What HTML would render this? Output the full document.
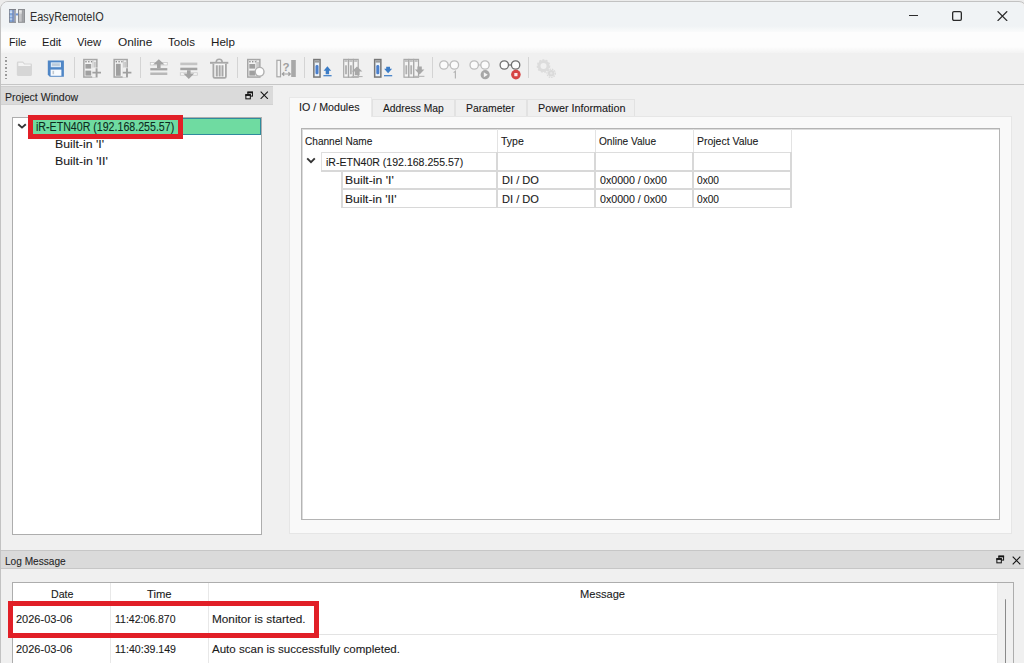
<!DOCTYPE html>
<html><head><meta charset="utf-8"><style>
html,body{margin:0;padding:0;}
body{width:1024px;height:663px;overflow:hidden;position:relative;background:#f0f0f0;font-family:"Liberation Sans",sans-serif;}
body>div,body>svg{position:absolute;}
.t{white-space:pre;-webkit-text-stroke:0.1px currentColor;}
</style></head><body>
<div style="left:0;top:0;width:1024px;height:663px;background:#ececec;"></div>
<div style="left:0;top:1px;width:1025px;height:700px;background:#f0f0f0;border:1px solid #c2c2c2;border-radius:8px 8px 0 0;"></div>
<div style="left:1px;top:2px;width:1023px;height:30px;background:linear-gradient(#f0f3f5 0,#f0f3f5 80%,#fafbfb 100%);border-radius:7px 7px 0 0;"></div>
<svg style="left:0;top:0" width="30" height="30" viewBox="0 0 30 30">
<rect x="9" y="9" width="7" height="13.8" fill="#7d8088"/>
<rect x="9.8" y="10" width="2.6" height="11.8" fill="#7ea6de"/>
<rect x="9.8" y="10.6" width="2.6" height="1" fill="#eef4fb"/><rect x="9.8" y="12.2" width="2.6" height="0.9" fill="#e6eef8"/>
<rect x="9.8" y="15.6" width="2.6" height="0.9" fill="#dfe9f6"/><rect x="9.8" y="18.6" width="2.6" height="0.9" fill="#dfe9f6"/>
<rect x="12.6" y="10" width="1.8" height="11.8" fill="#7c93c8"/>
<rect x="14.5" y="10" width="1.2" height="11.8" fill="#b9bcc2"/>
<rect x="15.8" y="13.4" width="2.6" height="2" fill="#6f95d6"/>
<rect x="18" y="9" width="7" height="13.8" fill="#8a8c90"/>
<rect x="19" y="10" width="2.8" height="11.8" fill="#c4c5c8"/>
<rect x="19" y="10.6" width="2.8" height="1.1" fill="#f4f4f4"/><rect x="19" y="12.4" width="2.8" height="1" fill="#ececec"/>
<rect x="22.2" y="10" width="2" height="11.8" fill="#a4a6aa"/>
</svg>
<div class="t" style="left:30px;top:10.59px;font-size:12.5px;line-height:13.963px;color:#2e2e2e;letter-spacing:0.000px;transform:scaleX(0.8708);transform-origin:0 0;-webkit-text-stroke:0;">EasyRemoteIO</div>
<div style="left:908.5px;top:14.8px;width:9.8px;height:1.3px;background:#2c2c2c;"></div>
<svg style="left:951px;top:10px" width="12" height="12" viewBox="0 0 12 12"><rect x="1.65" y="1.65" width="8.7" height="8.7" rx="1.3" fill="none" stroke="#2a2a2a" stroke-width="1.3"/></svg>
<svg style="left:997px;top:11px" width="11" height="10" viewBox="0 0 11 10"><path d="M0.6 0.3 L10.2 9.9 M10.2 0.3 L0.6 9.9" stroke="#2a2a2a" stroke-width="1.25"/></svg>
<div style="left:1px;top:32px;width:1023px;height:21px;background:linear-gradient(#fdfdfd 0,#fdfdfd 70%,#f3f3f3 100%);"></div>
<div class="t" style="left:9.3px;top:36.49px;font-size:11.5px;line-height:12.845px;color:#1a1a1a;letter-spacing:0.000px;transform:scaleX(0.9336);transform-origin:0 0;-webkit-text-stroke:0;">File</div>
<div class="t" style="left:42.2px;top:36.49px;font-size:11.5px;line-height:12.845px;color:#1a1a1a;letter-spacing:0.000px;transform:scaleX(0.9689);transform-origin:0 0;-webkit-text-stroke:0;">Edit</div>
<div class="t" style="left:77.3px;top:36.49px;font-size:11.5px;line-height:12.845px;color:#1a1a1a;letter-spacing:0.000px;transform:scaleX(0.9790);transform-origin:0 0;-webkit-text-stroke:0;">View</div>
<div class="t" style="left:117.6px;top:36.49px;font-size:11.5px;line-height:12.845px;color:#1a1a1a;letter-spacing:0.000px;transform:scaleX(1.0318);transform-origin:0 0;-webkit-text-stroke:0;">Online</div>
<div class="t" style="left:167.6px;top:36.49px;font-size:11.5px;line-height:12.845px;color:#1a1a1a;letter-spacing:0.000px;transform:scaleX(1.0020);transform-origin:0 0;-webkit-text-stroke:0;">Tools</div>
<div class="t" style="left:210.5px;top:36.49px;font-size:11.5px;line-height:12.845px;color:#1a1a1a;letter-spacing:0.000px;transform:scaleX(1.0105);transform-origin:0 0;-webkit-text-stroke:0;">Help</div>
<div style="left:1px;top:53px;width:1023px;height:31px;background:#f0f0f0;"></div>
<div style="left:1px;top:83.6px;width:1023px;height:1px;background:#c6c6c6;"></div>
<div style="left:5px;top:56.5px;width:1.5px;height:1.5px;background:#9a9a9a;"></div>
<div style="left:5px;top:60.0px;width:1.5px;height:1.5px;background:#9a9a9a;"></div>
<div style="left:5px;top:63.5px;width:1.5px;height:1.5px;background:#9a9a9a;"></div>
<div style="left:5px;top:67.0px;width:1.5px;height:1.5px;background:#9a9a9a;"></div>
<div style="left:5px;top:70.5px;width:1.5px;height:1.5px;background:#9a9a9a;"></div>
<div style="left:5px;top:74.0px;width:1.5px;height:1.5px;background:#9a9a9a;"></div>
<div style="left:5px;top:77.5px;width:1.5px;height:1.5px;background:#9a9a9a;"></div>
<div style="left:73.5px;top:57px;width:1px;height:21px;background:#d4d4d4;"></div>
<div style="left:140px;top:57px;width:1px;height:21px;background:#d4d4d4;"></div>
<div style="left:237px;top:57px;width:1px;height:21px;background:#d4d4d4;"></div>
<div style="left:303.5px;top:57px;width:1px;height:21px;background:#d4d4d4;"></div>
<div style="left:431.5px;top:57px;width:1px;height:21px;background:#d4d4d4;"></div>
<div style="left:528px;top:57px;width:1px;height:21px;background:#d4d4d4;"></div>
<div style="left:1px;top:86px;width:271.5px;height:18.5px;background:#dadada;border-top:1px solid #cfcfcf;border-bottom:1px solid #d2d2d2;box-sizing:border-box;"></div>
<div class="t" style="left:5.3px;top:90.95px;font-size:11px;line-height:12.287px;color:#262626;letter-spacing:0.000px;transform:scaleX(0.9579);transform-origin:0 0;">Project Window</div>
<svg style="left:244.6px;top:90.9px" width="8.6" height="8.8" viewBox="0 0 10 10"><rect x="3.4" y="1.2" width="5.4" height="4.6" fill="none" stroke="#151515" stroke-width="1.2"/><rect x="2.8" y="0.6" width="6.6" height="2" fill="#151515"/><rect x="1" y="4.2" width="5.2" height="4.8" fill="#dadada" stroke="#151515" stroke-width="1.2"/><rect x="0.4" y="3.6" width="6.4" height="2" fill="#151515"/></svg>
<svg style="left:260px;top:90.8px" width="8.5" height="8.5" viewBox="0 0 9 9"><path d="M0.7 0.7 L8.3 8.3 M8.3 0.7 L0.7 8.3" stroke="#151515" stroke-width="1.15"/></svg>
<div style="left:12px;top:117px;width:250px;height:417.5px;background:#fff;border:1px solid #adadad;box-sizing:border-box;"></div>
<div style="left:30px;top:118px;width:231px;height:16.5px;background:#6fdba1;border:1.5px solid #2e8b9c;box-sizing:border-box;"></div>
<svg style="left:17px;top:122px" width="10" height="7" viewBox="0 0 10 7"><path d="M1.2 2.2 L5 5.6 L8.8 2.2" fill="none" stroke="#333" stroke-width="1.9"/></svg>
<div class="t" style="left:35.5px;top:120.74px;font-size:12px;line-height:13.404px;color:#0d2a1c;letter-spacing:0.000px;transform:scaleX(0.8854);transform-origin:0 0;-webkit-text-stroke:0.1px currentColor;">iR-ETN40R (192.168.255.57)</div>
<div style="left:28px;top:115px;width:155px;height:24px;border:5px solid #e11f27;box-sizing:border-box;"></div>
<div class="t" style="left:55.0px;top:138.19px;font-size:11.5px;line-height:12.845px;color:#1a1a1a;letter-spacing:0.000px;transform:scaleX(1.0668);transform-origin:0 0;-webkit-text-stroke:0.1px currentColor;">Built-in 'I'</div>
<div class="t" style="left:55.0px;top:155.09px;font-size:11.5px;line-height:12.845px;color:#1a1a1a;letter-spacing:0.000px;transform:scaleX(1.0747);transform-origin:0 0;-webkit-text-stroke:0.1px currentColor;">Built-in 'II'</div>
<div style="left:288.8px;top:116px;width:723px;height:417.5px;background:#f9f9f9;border:1px solid #e6e6e6;box-sizing:border-box;"></div>
<div style="left:289px;top:96.7px;width:83px;height:20.3px;background:#f9f9f9;border:1px solid #e8e8e8;border-bottom:none;box-sizing:border-box;"></div>
<div style="left:372px;top:98.5px;width:82.5px;height:17.5px;background:#efefef;border:1px solid #e2e2e2;border-bottom:none;box-sizing:border-box;"></div>
<div style="left:454.5px;top:98.5px;width:72.5px;height:17.5px;background:#efefef;border:1px solid #e2e2e2;border-bottom:none;box-sizing:border-box;"></div>
<div style="left:527px;top:98.5px;width:108px;height:17.5px;background:#efefef;border:1px solid #e2e2e2;border-bottom:none;box-sizing:border-box;"></div>
<div class="t" style="left:299px;top:100.64px;font-size:11px;line-height:12.287px;color:#1a1a1a;letter-spacing:0.000px;transform:scaleX(0.9702);transform-origin:0 0;">IO / Modules</div>
<div class="t" style="left:382.5px;top:102.14px;font-size:11px;line-height:12.287px;color:#1a1a1a;letter-spacing:0.000px;transform:scaleX(0.9366);transform-origin:0 0;">Address Map</div>
<div class="t" style="left:466.2px;top:102.14px;font-size:11px;line-height:12.287px;color:#1a1a1a;letter-spacing:0.000px;transform:scaleX(0.9464);transform-origin:0 0;">Parameter</div>
<div class="t" style="left:538.4px;top:102.14px;font-size:11px;line-height:12.287px;color:#1a1a1a;letter-spacing:0.000px;transform:scaleX(0.9791);transform-origin:0 0;">Power Information</div>
<div style="left:301px;top:128px;width:699px;height:392px;background:#fff;border:1px solid #b4b4b4;box-shadow:inset 1px 1px 0 #dcdcdc;box-sizing:border-box;"></div>
<div style="left:497px;top:129px;width:1px;height:23px;background:#e3e3e3;"></div>
<div style="left:595px;top:129px;width:1px;height:23px;background:#e3e3e3;"></div>
<div style="left:693px;top:129px;width:1px;height:23px;background:#e3e3e3;"></div>
<div style="left:791px;top:129px;width:1px;height:23px;background:#e3e3e3;"></div>
<div class="t" style="left:305px;top:135.29px;font-size:11.5px;line-height:12.845px;color:#1a1a1a;letter-spacing:0.000px;transform:scaleX(0.8773);transform-origin:0 0;">Channel Name</div>
<div class="t" style="left:501.2px;top:135.29px;font-size:11.5px;line-height:12.845px;color:#1a1a1a;letter-spacing:0.000px;transform:scaleX(0.9145);transform-origin:0 0;">Type</div>
<div class="t" style="left:598.7px;top:135.29px;font-size:11.5px;line-height:12.845px;color:#1a1a1a;letter-spacing:0.000px;transform:scaleX(0.8785);transform-origin:0 0;">Online Value</div>
<div class="t" style="left:696.6px;top:135.29px;font-size:11.5px;line-height:12.845px;color:#1a1a1a;letter-spacing:0.000px;transform:scaleX(0.9090);transform-origin:0 0;">Project Value</div>
<div style="left:321px;top:151.5px;width:471px;height:1.5px;background:#dddddd;"></div>
<div style="left:321px;top:169.5px;width:471px;height:2px;background:#d8d8d8;"></div>
<div style="left:341px;top:188px;width:451px;height:2px;background:#d8d8d8;"></div>
<div style="left:341px;top:206.5px;width:451px;height:1.5px;background:#d8d8d8;"></div>
<div style="left:321px;top:152px;width:1px;height:18px;background:#e0e0e0;"></div>
<div style="left:341px;top:170px;width:1.5px;height:37px;background:#dadada;"></div>
<div style="left:496px;top:152px;width:2px;height:55px;background:#d8d8d8;"></div>
<div style="left:594px;top:152px;width:2px;height:55px;background:#d8d8d8;"></div>
<div style="left:692px;top:152px;width:2px;height:55px;background:#d8d8d8;"></div>
<div style="left:790px;top:152px;width:2px;height:55px;background:#d8d8d8;"></div>
<svg style="left:306px;top:156.5px" width="10" height="7" viewBox="0 0 10 7"><path d="M1.2 1.3 L5 5.1 L8.8 1.3" fill="none" stroke="#333" stroke-width="1.9"/></svg>
<div class="t" style="left:325.5px;top:156.19px;font-size:11.5px;line-height:12.845px;color:#1a1a1a;letter-spacing:0.000px;transform:scaleX(0.9172);transform-origin:0 0;">iR-ETN40R (192.168.255.57)</div>
<div class="t" style="left:345.1px;top:174.49px;font-size:11.5px;line-height:12.845px;color:#1a1a1a;letter-spacing:0.000px;transform:scaleX(1.0624);transform-origin:0 0;">Built-in 'I'</div>
<div class="t" style="left:501.7px;top:174.49px;font-size:11.5px;line-height:12.845px;color:#1a1a1a;letter-spacing:0.000px;transform:scaleX(0.9626);transform-origin:0 0;">DI / DO</div>
<div class="t" style="left:599.6px;top:174.49px;font-size:11.5px;line-height:12.845px;color:#1a1a1a;letter-spacing:0.000px;transform:scaleX(0.9245);transform-origin:0 0;">0x0000 / 0x00</div>
<div class="t" style="left:697.4px;top:174.49px;font-size:11.5px;line-height:12.845px;color:#1a1a1a;letter-spacing:0.000px;transform:scaleX(0.8822);transform-origin:0 0;">0x00</div>
<div class="t" style="left:345.1px;top:192.89px;font-size:11.5px;line-height:12.845px;color:#1a1a1a;letter-spacing:0.000px;transform:scaleX(1.0483);transform-origin:0 0;">Built-in 'II'</div>
<div class="t" style="left:501.7px;top:192.89px;font-size:11.5px;line-height:12.845px;color:#1a1a1a;letter-spacing:0.000px;transform:scaleX(0.9626);transform-origin:0 0;">DI / DO</div>
<div class="t" style="left:599.6px;top:192.89px;font-size:11.5px;line-height:12.845px;color:#1a1a1a;letter-spacing:0.000px;transform:scaleX(0.9245);transform-origin:0 0;">0x0000 / 0x00</div>
<div class="t" style="left:697.4px;top:192.89px;font-size:11.5px;line-height:12.845px;color:#1a1a1a;letter-spacing:0.000px;transform:scaleX(0.8822);transform-origin:0 0;">0x00</div>
<div style="left:1px;top:550px;width:1023px;height:18.5px;background:#dadada;border-top:1px solid #c6c6c6;border-bottom:1px solid #c6c6c6;box-sizing:border-box;"></div>
<div class="t" style="left:5.4px;top:555.14px;font-size:11px;line-height:12.287px;color:#262626;letter-spacing:0.000px;transform:scaleX(0.9191);transform-origin:0 0;">Log Message</div>
<svg style="left:996.4px;top:555.2px" width="8.6" height="8.8" viewBox="0 0 10 10"><rect x="3.4" y="1.2" width="5.4" height="4.6" fill="none" stroke="#151515" stroke-width="1.2"/><rect x="2.8" y="0.6" width="6.6" height="2" fill="#151515"/><rect x="1" y="4.2" width="5.2" height="4.8" fill="#dadada" stroke="#151515" stroke-width="1.2"/><rect x="0.4" y="3.6" width="6.4" height="2" fill="#151515"/></svg>
<svg style="left:1011.5px;top:555.5px" width="9" height="9" viewBox="0 0 9 9"><path d="M0.7 0.7 L8.3 8.3 M8.3 0.7 L0.7 8.3" stroke="#151515" stroke-width="1.15"/></svg>
<div style="left:12px;top:582px;width:1002px;height:100px;background:#fff;border:1px solid #adadad;box-sizing:border-box;"></div>
<div style="left:110px;top:583px;width:1px;height:80px;background:#e8e8e8;"></div>
<div style="left:208px;top:583px;width:1px;height:80px;background:#e8e8e8;"></div>
<div style="left:13px;top:634px;width:983.5px;height:1px;background:#e3e3e3;"></div>
<div style="left:996.5px;top:583px;width:16.5px;height:80px;background:#f0f0f0;border-left:1px solid #e8e8e8;box-sizing:border-box;"></div>
<div style="left:1004.5px;top:599px;width:1.8px;height:70px;background:#8a8a8a;border-radius:1px;"></div>
<div class="t" style="left:50.7px;top:588.19px;font-size:11.5px;line-height:12.845px;color:#1a1a1a;letter-spacing:0.000px;transform:scaleX(0.9262);transform-origin:0 0;">Date</div>
<div class="t" style="left:146.9px;top:588.19px;font-size:11.5px;line-height:12.845px;color:#1a1a1a;letter-spacing:0.000px;transform:scaleX(0.9790);transform-origin:0 0;">Time</div>
<div class="t" style="left:579.8px;top:588.39px;font-size:11.5px;line-height:12.845px;color:#1a1a1a;letter-spacing:0.000px;transform:scaleX(0.9644);transform-origin:0 0;">Message</div>
<div class="t" style="left:16px;top:613.39px;font-size:11.5px;line-height:12.845px;color:#1a1a1a;letter-spacing:0.000px;transform:scaleX(0.9571);transform-origin:0 0;">2026-03-06</div>
<div class="t" style="left:114.5px;top:613.39px;font-size:11.5px;line-height:12.845px;color:#1a1a1a;letter-spacing:0.000px;transform:scaleX(0.9126);transform-origin:0 0;">11:42:06.870</div>
<div class="t" style="left:211.8px;top:613.39px;font-size:11.5px;line-height:12.845px;color:#1a1a1a;letter-spacing:0.000px;transform:scaleX(1.0230);transform-origin:0 0;">Monitor is started.</div>
<div class="t" style="left:16px;top:642.79px;font-size:11.5px;line-height:12.845px;color:#1a1a1a;letter-spacing:0.000px;transform:scaleX(0.9571);transform-origin:0 0;">2026-03-06</div>
<div class="t" style="left:114.5px;top:642.79px;font-size:11.5px;line-height:12.845px;color:#1a1a1a;letter-spacing:0.000px;transform:scaleX(0.9201);transform-origin:0 0;">11:40:39.149</div>
<div class="t" style="left:211.8px;top:642.79px;font-size:11.5px;line-height:12.845px;color:#1a1a1a;letter-spacing:0.000px;transform:scaleX(1.0038);transform-origin:0 0;">Auto scan is successfully completed.</div>
<div style="left:8px;top:600.5px;width:311px;height:37.5px;border:5px solid #e11f27;box-sizing:border-box;"></div>
<svg style="left:0;top:0" width="600" height="90" viewBox="0 0 600 90"><path d="M16.8 63 Q16.8 61.6 18.2 61.6 L23 61.6 L24.8 63.6 L30.8 63.6 Q32 63.6 32 64.8 L32 74.6 Q32 75.9 30.7 75.9 L18.1 75.9 Q16.8 75.9 16.8 74.6 Z" fill="#d6d6d6"/><path d="M18.3 62.8 L22.6 62.8 L24.2 64.6 L30.6 64.6 L30.6 66 L18.3 66 Z" fill="#f4f4f4"/><path d="M47.8 60.6 L63.9 60.6 L63.9 76.7 L49.8 76.7 L47.8 74.7 Z" fill="#4f86c6"/><rect x="50.8" y="62.3" width="10.2" height="4.9" fill="#dbe9f7"/><rect x="52" y="63.6" width="7.8" height="1" fill="#a9b8c8"/><rect x="52" y="65.2" width="7.8" height="0.8" fill="#b9c6d4"/><rect x="50.6" y="69.6" width="10.8" height="6.2" fill="#f7fbff"/><rect x="52.5" y="70.8" width="1.6" height="3.4" fill="#c0c8d0"/><rect x="83.85" y="59.55" width="13.0" height="17.5" fill="#f3f3f3" stroke="#a6a6a6" stroke-width="1.5"/><rect x="85.3" y="61.0" width="1.4" height="1.4" fill="#8f8f8f"/><rect x="88.1" y="61.0" width="1.4" height="1.4" fill="#8f8f8f"/><rect x="90.89999999999999" y="61.0" width="1.4" height="1.4" fill="#8f8f8f"/><line x1="92.96" y1="59.8" x2="92.96" y2="76.8" stroke="#c4c4c4" stroke-width="1"/><rect x="85.39999999999999" y="64.0" width="5.8" height="4.6" fill="#a0a0a0"/><rect x="85.39999999999999" y="70.6" width="5.8" height="5" fill="#a0a0a0"/><rect x="93.83" y="61.8" width="2" height="6" fill="#c8c8c8"/><rect x="92.2" y="67.6" width="9.4" height="10" fill="#f0f0f0"/><path d="M96.6 68.3 V77.2 M92.4 72.6 H101" stroke="#a0a0a0" stroke-width="1.9"/><rect x="114.15" y="59.55" width="13.0" height="17.5" fill="#f3f3f3" stroke="#a6a6a6" stroke-width="1.5"/><rect x="115.60000000000001" y="61.0" width="1.4" height="1.4" fill="#8f8f8f"/><rect x="118.4" y="61.0" width="1.4" height="1.4" fill="#8f8f8f"/><rect x="121.2" y="61.0" width="1.4" height="1.4" fill="#8f8f8f"/><line x1="123.26" y1="59.8" x2="123.26" y2="76.8" stroke="#c4c4c4" stroke-width="1"/><rect x="115.9" y="63.8" width="4.8" height="12" fill="#a0a0a0"/><rect x="124.13000000000001" y="61.8" width="2" height="6" fill="#c8c8c8"/><rect x="122.6" y="67.6" width="9.4" height="10" fill="#f0f0f0"/><path d="M127 68.3 V77.2 M122.8 72.6 H131.4" stroke="#a0a0a0" stroke-width="1.9"/><rect x="150.3" y="62.4" width="17" height="2.6" fill="#fafafa" stroke="#c8c8c8" stroke-width="0.8"/><rect x="150.3" y="68.1" width="17" height="2.3" fill="#a3a3a3"/><rect x="150.3" y="72.5" width="17" height="2.5" fill="#b8b8b8"/><path d="M158.8 59.2 L164.5 64.6 L160.6 64.6 L160.6 68 L157 68 L157 64.6 L153.1 64.6 Z" fill="#a3a3a3"/><rect x="180.3" y="62.6" width="17" height="2.6" fill="#c4c4c4"/><rect x="180.3" y="67.7" width="17" height="2.5" fill="#a3a3a3"/><rect x="180.3" y="72.8" width="17" height="2.4" fill="#fafafa" stroke="#c8c8c8" stroke-width="0.8"/><path d="M188.8 78.9 L183.4 73.6 L187 73.6 L187 70.2 L190.6 70.2 L190.6 73.6 L194.2 73.6 Z" fill="#a3a3a3"/><path d="M216.2 62.3 Q216.2 59.2 219.2 59.2 Q222.2 59.2 222.2 62.3" fill="none" stroke="#a8a8a8" stroke-width="1.6"/><rect x="210" y="61.8" width="18.3" height="2" fill="#a8a8a8"/><path d="M213.4 63.8 L213.4 76.5 Q213.4 77.8 214.8 77.8 L224.6 77.8 Q225.9 77.8 225.9 76.5 L225.9 63.8" fill="#f6f6f6" stroke="#a8a8a8" stroke-width="1.8"/><path d="M216.8 65.2 V76.6 M219.65 65.2 V76.6 M222.5 65.2 V76.6" stroke="#a8a8a8" stroke-width="2"/><rect x="247.75" y="59.55" width="12.1" height="17.5" fill="#f3f3f3" stroke="#a6a6a6" stroke-width="1.5"/><rect x="249.2" y="61.0" width="1.4" height="1.4" fill="#8f8f8f"/><rect x="252.0" y="61.0" width="1.4" height="1.4" fill="#8f8f8f"/><rect x="254.79999999999998" y="61.0" width="1.4" height="1.4" fill="#8f8f8f"/><line x1="256.248" y1="59.8" x2="256.248" y2="76.8" stroke="#c4c4c4" stroke-width="1"/><rect x="249.3" y="64.0" width="5.8" height="4.6" fill="#a0a0a0"/><rect x="249.3" y="70.6" width="5.8" height="5" fill="#a0a0a0"/><rect x="257.064" y="61.8" width="2" height="6" fill="#c8c8c8"/><circle cx="259.6" cy="71.8" r="4.4" fill="#fdfdfd" stroke="#b0b0b0" stroke-width="1.4"/><rect x="276.9" y="60.3" width="3.6" height="16.5" fill="#f6f6f6" stroke="#a8a8a8" stroke-width="1.2"/><rect x="291.2" y="60" width="4.6" height="17" fill="#a8a8a8"/><text x="282.6" y="70.5" font-family="Liberation Sans" font-size="11.5" font-weight="bold" fill="#a0a0a0">?</text><path d="M282.3 74 H290.3 M284.2 72.3 L282.3 74 L284.2 75.7 M288.4 72.3 L290.3 74 L288.4 75.7" fill="none" stroke="#a0a0a0" stroke-width="1.2"/><rect x="313.85" y="59.55" width="6.2" height="17.5" fill="#e9f1f9" stroke="#777" stroke-width="1.5"/><rect x="314.6" y="60.3" width="4.7" height="2.3" fill="#9a9a9a"/><rect x="315.5" y="65.0" width="3" height="9.3" rx="1.4" fill="#4a7fcc"/><path d="M327.4 66.2 L331.2 70.8 L329.1 70.8 L329.1 74.3 L325.7 74.3 L325.7 70.8 L323.6 70.8 Z" fill="#3b7cc6"/><rect x="323.4" y="75.1" width="8.2" height="1.2" fill="#3b7cc6"/><rect x="343.70000000000005" y="59.4" width="4.7" height="17.8" fill="#f4f4f4" stroke="#a8a8a8" stroke-width="1.2"/><rect x="344.40000000000003" y="60.199999999999996" width="3.2" height="1.6" fill="#b8b8b8"/><rect x="345.1" y="65.3" width="1.8" height="9" fill="#b0b0b0"/><rect x="348.6" y="59.4" width="4.7" height="17.8" fill="#f4f4f4" stroke="#a8a8a8" stroke-width="1.2"/><rect x="349.3" y="60.199999999999996" width="3.2" height="1.6" fill="#b8b8b8"/><rect x="350.0" y="65.3" width="1.8" height="9" fill="#b0b0b0"/><rect x="353.50000000000006" y="59.4" width="4.7" height="17.8" fill="#f4f4f4" stroke="#a8a8a8" stroke-width="1.2"/><rect x="354.20000000000005" y="60.199999999999996" width="3.2" height="1.6" fill="#b8b8b8"/><path d="M357 66.5 L362.4 71.5 L359.6 71.5 L359.6 75.2 L354.8 75.2 L354.8 71.5 L351.8 71.5 Z" fill="#a8a8a8"/><rect x="351.6" y="76" width="11" height="1.1" fill="#b5b5b5"/><rect x="374.65" y="59.55" width="6.2" height="17.5" fill="#e9f1f9" stroke="#777" stroke-width="1.5"/><rect x="375.4" y="60.3" width="4.7" height="2.3" fill="#9a9a9a"/><rect x="376.29999999999995" y="65.0" width="3" height="9.3" rx="1.4" fill="#4a7fcc"/><path d="M388.1 73.3 L392.1 68.8 L390 68.8 L390 66.8 L386.2 66.8 L386.2 68.8 L384.1 68.8 Z" fill="#3b7cc6"/><rect x="384" y="75.1" width="8.2" height="1.2" fill="#3b7cc6"/><rect x="404.0" y="59.4" width="4.7" height="17.8" fill="#f4f4f4" stroke="#a8a8a8" stroke-width="1.2"/><rect x="404.7" y="60.199999999999996" width="3.2" height="1.6" fill="#b8b8b8"/><rect x="405.4" y="65.3" width="1.8" height="9" fill="#b0b0b0"/><rect x="408.9" y="59.4" width="4.7" height="17.8" fill="#f4f4f4" stroke="#a8a8a8" stroke-width="1.2"/><rect x="409.59999999999997" y="60.199999999999996" width="3.2" height="1.6" fill="#b8b8b8"/><rect x="410.29999999999995" y="65.3" width="1.8" height="9" fill="#b0b0b0"/><rect x="413.8" y="59.4" width="4.7" height="17.8" fill="#f4f4f4" stroke="#a8a8a8" stroke-width="1.2"/><rect x="414.5" y="60.199999999999996" width="3.2" height="1.6" fill="#b8b8b8"/><path d="M419.6 74.5 L424.4 69.5 L421.8 69.5 L421.8 66.5 L417.4 66.5 L417.4 69.5 L414.8 69.5 Z" fill="#a8a8a8"/><rect x="414.2" y="75.8" width="10.2" height="1.1" fill="#b5b5b5"/><circle cx="443.9" cy="65" r="4.2" fill="#fbfbfb" stroke="#bdbdbd" stroke-width="1.3"/><circle cx="454.4" cy="65" r="4.2" fill="#fbfbfb" stroke="#bdbdbd" stroke-width="1.3"/><path d="M448.1 65 H450.2" stroke="#bdbdbd" stroke-width="1.2"/><path d="M453.6 72.6 L455.4 71.2 V78.6" fill="none" stroke="#b5b5b5" stroke-width="1.2"/><circle cx="474.2" cy="65" r="4.2" fill="#fbfbfb" stroke="#bdbdbd" stroke-width="1.3"/><circle cx="485" cy="65" r="4.2" fill="#fbfbfb" stroke="#bdbdbd" stroke-width="1.3"/><path d="M478.4 65 H480.8" stroke="#bdbdbd" stroke-width="1.2"/><circle cx="485.2" cy="74.7" r="4.6" fill="#a6a6a6"/><path d="M483.8 72.2 L487.8 74.7 L483.8 77.2 Z" fill="#f4f4f4"/><circle cx="504.3" cy="65" r="4.2" fill="#fdfdfd" stroke="#707070" stroke-width="1.3"/><circle cx="515.6" cy="65" r="4.2" fill="#fdfdfd" stroke="#707070" stroke-width="1.3"/><path d="M508.5 65 H511.4" stroke="#707070" stroke-width="1.2"/><circle cx="515.9" cy="74.6" r="4.8" fill="#d64545"/><rect x="514.3" y="73" width="3.2" height="3.2" fill="#fbeaea"/><circle cx="543.5" cy="66" r="4.5" fill="none" stroke="#dcdcdc" stroke-width="3"/><circle cx="543.5" cy="66" r="6" fill="none" stroke="#dcdcdc" stroke-width="1.6" stroke-dasharray="2 1.3"/><circle cx="551.2" cy="73.3" r="3.3" fill="#dadada"/><circle cx="551.2" cy="73.3" r="4.2" fill="none" stroke="#dadada" stroke-width="1.2" stroke-dasharray="1.5 1"/><circle cx="551.2" cy="73.3" r="1.2" fill="#e6e6e6"/></svg>
</body></html>
